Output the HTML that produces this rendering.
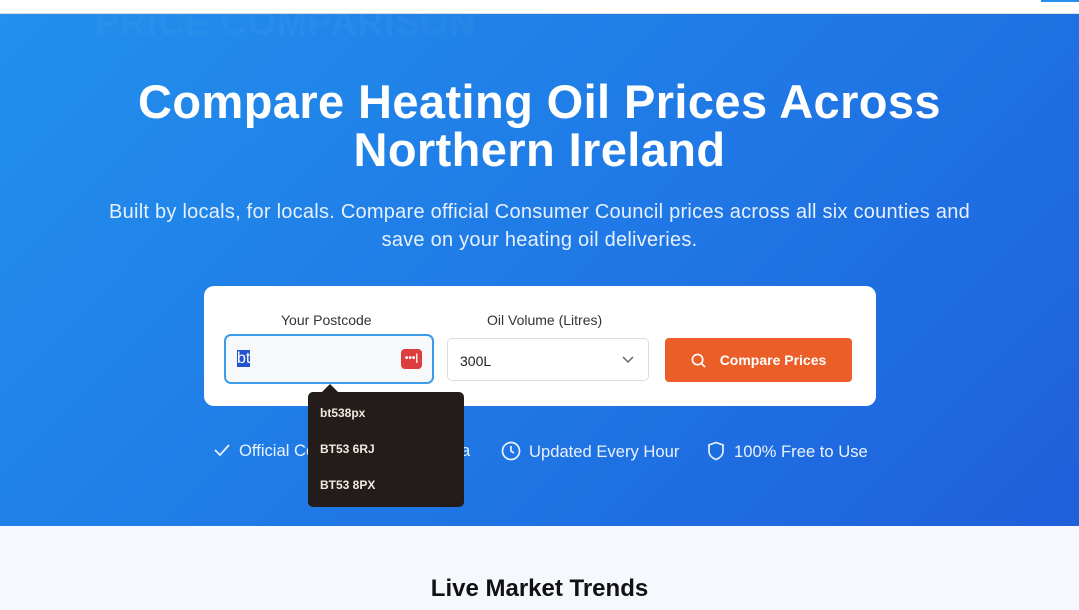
<!DOCTYPE html>
<html><head><meta charset="utf-8"><style>
*{box-sizing:border-box;margin:0;padding:0}
body{width:1079px;height:610px;overflow:hidden;font-family:"Liberation Sans",sans-serif;background:#fff;position:relative}
.top{position:absolute;left:0;top:0;width:1079px;height:14px;background:#fff;border-bottom:1px solid #ddd}
.top .b{position:absolute;right:0;top:0;width:38px;height:2px;background:#2290ec}
.hero{position:absolute;top:14px;left:0;width:1079px;height:512px;background:linear-gradient(135deg,#2290ec 0%,#1f7ae6 50%,#1f5fdb 100%);overflow:hidden}
.wm{position:absolute;left:95px;top:-12px;font-size:36px;font-weight:bold;color:rgba(255,255,255,0.035);letter-spacing:1px}
h1{position:absolute;top:64px;left:0;width:1079px;text-align:center;color:#fff;font-size:47px;line-height:48px;font-weight:bold;letter-spacing:0.4px}
.sub{position:absolute;top:184px;left:0;width:1079px;text-align:center;color:#e6f0ff;font-size:20px;line-height:28px;letter-spacing:0.25px}
.card{position:absolute;left:204px;top:272px;width:672px;height:120px;background:#fff;border-radius:10px}
.lbl{position:absolute;top:26px;font-size:14px;color:#333}
.pc{position:absolute;left:20px;top:48px;width:210px;height:50px;border:2px solid #3b9be8;border-radius:7px;background:#f6f8f9}
.pc .t{position:absolute;left:11px;top:14px;font-size:16px;background:#2255cc;color:#fff;line-height:17px}
.pc .k{position:absolute;right:10px;top:13px;width:21px;height:20px;background:#dc3d3d;border-radius:4px;color:#fff;font-size:10px;text-align:center;line-height:19px;font-weight:bold}
.sel{position:absolute;left:243px;top:52px;width:202px;height:43px;border:1px solid #ddd;border-radius:5px;font-size:14px;padding:14px 12px;color:#222}
.btn{position:absolute;left:461px;top:52px;width:187px;height:44px;background:#ec5e28;border-radius:4px;color:#fff;font-size:14px;font-weight:bold;text-align:center;line-height:44px}
.feat{position:absolute;top:427px;font-size:16.6px;color:#eaf2ff}
.dd{position:absolute;left:308px;top:392px;width:156px;height:115px;background:#231c1a;border-radius:5px;color:#f0e8e0;font-size:12px;font-weight:bold}
.dd:before{content:"";position:absolute;left:14px;top:-8px;border:8px solid transparent;border-top:0;border-bottom-color:#231c1a}
.dd div{position:absolute;left:12px}
.bot{position:absolute;top:526px;left:0;width:1079px;height:84px;background:#f5f8fc}
.bot h2{position:absolute;top:49px;width:1079px;text-align:center;font-size:24px;color:#111}
</style></head><body>
<div class="top"><div class="b"></div></div>
<div class="hero">
<div class="wm">PRICE COMPARISON</div>
<h1>Compare Heating Oil Prices Across<br>Northern Ireland</h1>
<div class="sub">Built by locals, for locals. Compare official Consumer Council prices across all six counties and<br>save on your heating oil deliveries.</div>
<div class="card">
<div class="lbl" style="left:77px">Your Postcode</div>
<div class="lbl" style="left:283px">Oil Volume (Litres)</div>
<div class="pc"><span class="t">bt</span><span class="k">•••|</span></div>
<div class="sel">300L<svg style="position:absolute;right:14px;top:17px" width="12" height="8" viewBox="0 0 12 8"><path d="M1 1l5 5 5-5" stroke="#666" fill="none" stroke-width="1.5"/></svg></div>
<div class="btn"><svg style="vertical-align:-3px;margin-right:14px" width="15" height="15" viewBox="0 0 16 16"><circle cx="7" cy="7" r="5.5" stroke="#fff" stroke-width="1.8" fill="none"/><path d="M11 11l4 4" stroke="#fff" stroke-width="1.8"/></svg>Compare Prices</div>
</div>
<div class="feat" style="left:213px"><svg width="18" height="14" viewBox="0 0 18 14" style="vertical-align:-1px;margin-right:8px"><path d="M2 7l5 5 9-10" stroke="#eaf2ff" stroke-width="1.8" fill="none"/></svg>Official Consumer Council Data</div>
<div class="feat" style="left:501px"><svg width="20" height="20" viewBox="0 0 20 20" style="vertical-align:-4px;margin-right:8px"><circle cx="10" cy="10" r="8.5" stroke="#eaf2ff" stroke-width="1.7" fill="none"/><path d="M10 5v5l3 2" stroke="#eaf2ff" stroke-width="1.7" fill="none"/></svg>Updated Every Hour</div>
<div class="feat" style="left:707px"><svg width="18" height="20" viewBox="0 0 18 20" style="vertical-align:-4px;margin-right:9px"><path d="M9 1.5L2 4v6c0 4 3 7 7 8.5 4-1.5 7-4.5 7-8.5V4z" stroke="#eaf2ff" stroke-width="1.7" fill="none"/></svg>100% Free to Use</div>
</div>
<div class="dd"><div style="top:14px">bt538px</div><div style="top:50px">BT53 6RJ</div><div style="top:86px">BT53 8PX</div></div>
<div class="bot"><h2>Live Market Trends</h2></div>
</body></html>
